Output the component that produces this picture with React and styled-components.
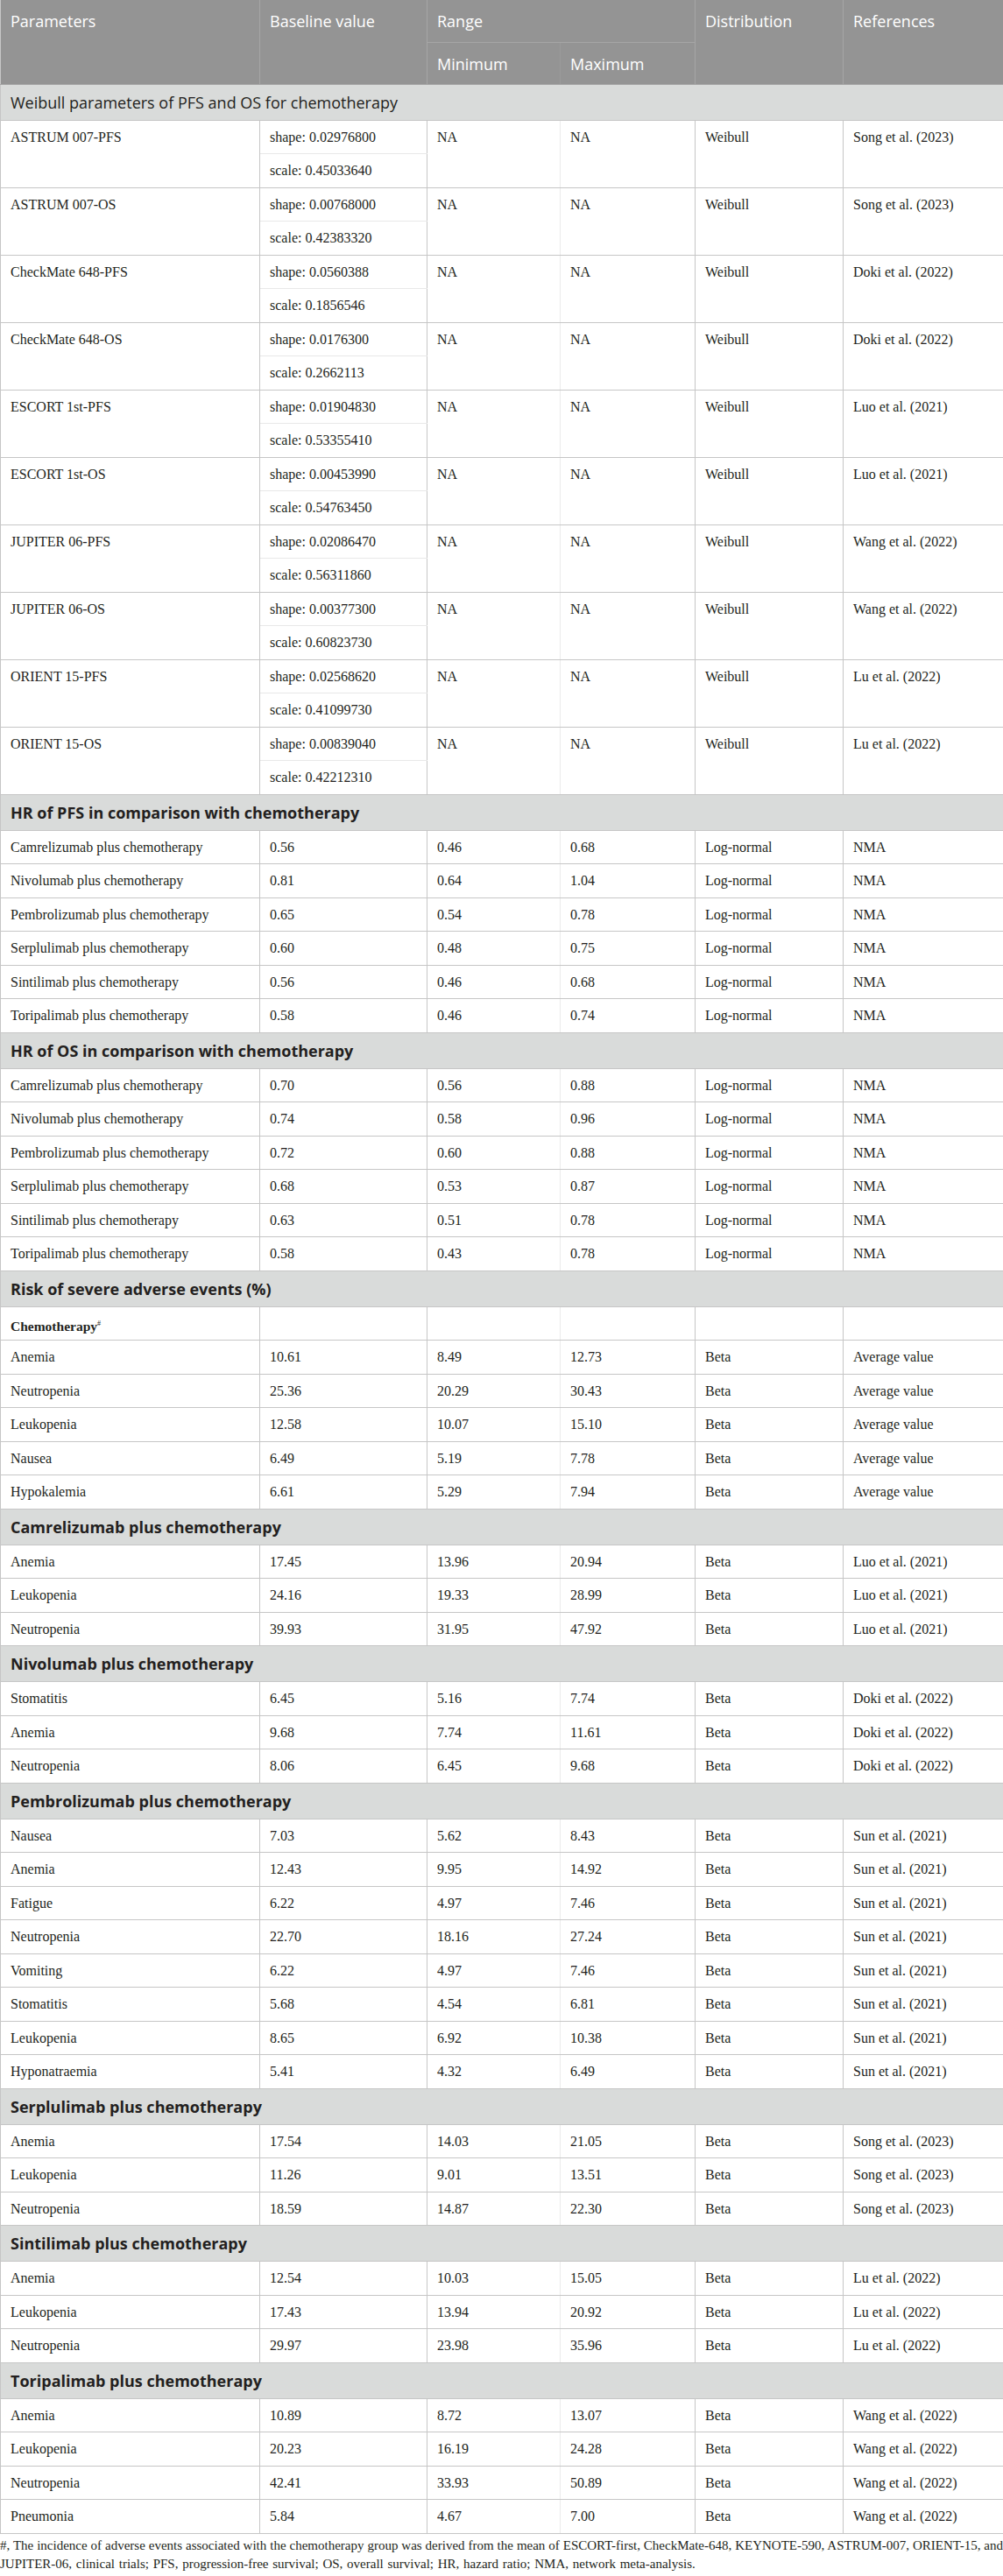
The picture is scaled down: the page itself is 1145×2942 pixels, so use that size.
import React from "react";
import styled, { createGlobalStyle } from "styled-components";

const GlobalStyle = createGlobalStyle`
  body {
    margin: 0;
    background: #ffffff;
  }
`;

const Page = styled.div`
  width: 1145px;
  font-family: "Liberation Serif", "Times New Roman", serif;
  color: #231f20;
`;

const Table = styled.table`
  width: 1145px;
  table-layout: fixed;
  border-collapse: collapse;
  border-left: 1px solid #c6c6c6;
`;

const HeadCell = styled.th`
  box-sizing: border-box;
  height: 48px;
  padding: 12px 11px 0;
  background: #949494;
  color: #ffffff;
  font-family: "Open Sans", "Noto Sans", sans-serif;
  font-size: 18px;
  font-weight: 400;
  line-height: 24px;
  text-align: left;
  vertical-align: top;
  border-right: 1px solid ${props => props.$soft ? "#9a9a9a" : "#a6a6a6"};
  border-bottom: 1px solid #a6a6a6;
`;

const SectionCell = styled.td`
  box-sizing: border-box;
  height: 41px;
  padding: 0 11px;
  background: #d9dbda;
  font-family: "Open Sans", "Noto Sans", sans-serif;
  font-size: 18px;
  font-weight: ${props => props.$bold ? 700 : 400};
  line-height: 24px;
  color: #231f20;
  vertical-align: middle;
  border-right: 1px solid #c6c6c6;
  border-bottom: 1px solid #c6c6c6;
`;

const Cell = styled.td`
  box-sizing: border-box;
  height: 38.5px;
  padding: 9px 11px 0;
  font-size: 16px;
  line-height: 20px;
  vertical-align: top;
  white-space: nowrap;
  border-right: 1px solid ${props => props.$soft ? "#ebebeb" : "#c6c6c6"};
  border-bottom: 1px solid ${props => props.$split ? "#e8e8e8" : "#c6c6c6"};
`;

const GroupLabel = styled.span`
  font-size: 15.5px;
  font-weight: 700;

  sup {
    font-size: 8px;
    font-weight: 400;
    vertical-align: 6px;
  }
`;

const Notes = styled.div`
  padding-top: 3px;
  font-size: 15px;
  line-height: 21px;
`;

const JustifiedLine = styled.div`
  text-align: justify;
  text-align-last: justify;
`;

const PlainLine = styled.div`
  word-spacing: 1px;
`;

const weibull = [
  ["ASTRUM 007-PFS", "0.02976800", "0.45033640", "Song et al. (2023)"],
  ["ASTRUM 007-OS", "0.00768000", "0.42383320", "Song et al. (2023)"],
  ["CheckMate 648-PFS", "0.0560388", "0.1856546", "Doki et al. (2022)"],
  ["CheckMate 648-OS", "0.0176300", "0.2662113", "Doki et al. (2022)"],
  ["ESCORT 1st-PFS", "0.01904830", "0.53355410", "Luo et al. (2021)"],
  ["ESCORT 1st-OS", "0.00453990", "0.54763450", "Luo et al. (2021)"],
  ["JUPITER 06-PFS", "0.02086470", "0.56311860", "Wang et al. (2022)"],
  ["JUPITER 06-OS", "0.00377300", "0.60823730", "Wang et al. (2022)"],
  ["ORIENT 15-PFS", "0.02568620", "0.41099730", "Lu et al. (2022)"],
  ["ORIENT 15-OS", "0.00839040", "0.42212310", "Lu et al. (2022)"],
];

const hrPfs = [
  ["Camrelizumab plus chemotherapy", "0.56", "0.46", "0.68"],
  ["Nivolumab plus chemotherapy", "0.81", "0.64", "1.04"],
  ["Pembrolizumab plus chemotherapy", "0.65", "0.54", "0.78"],
  ["Serplulimab plus chemotherapy", "0.60", "0.48", "0.75"],
  ["Sintilimab plus chemotherapy", "0.56", "0.46", "0.68"],
  ["Toripalimab plus chemotherapy", "0.58", "0.46", "0.74"],
];

const hrOs = [
  ["Camrelizumab plus chemotherapy", "0.70", "0.56", "0.88"],
  ["Nivolumab plus chemotherapy", "0.74", "0.58", "0.96"],
  ["Pembrolizumab plus chemotherapy", "0.72", "0.60", "0.88"],
  ["Serplulimab plus chemotherapy", "0.68", "0.53", "0.87"],
  ["Sintilimab plus chemotherapy", "0.63", "0.51", "0.78"],
  ["Toripalimab plus chemotherapy", "0.58", "0.43", "0.78"],
];

const chemoEvents = [
  ["Anemia", "10.61", "8.49", "12.73"],
  ["Neutropenia", "25.36", "20.29", "30.43"],
  ["Leukopenia", "12.58", "10.07", "15.10"],
  ["Nausea", "6.49", "5.19", "7.78"],
  ["Hypokalemia", "6.61", "5.29", "7.94"],
];

const drugEvents = [
  {
    title: "Camrelizumab plus chemotherapy",
    ref: "Luo et al. (2021)",
    rows: [
      ["Anemia", "17.45", "13.96", "20.94"],
      ["Leukopenia", "24.16", "19.33", "28.99"],
      ["Neutropenia", "39.93", "31.95", "47.92"],
    ],
  },
  {
    title: "Nivolumab plus chemotherapy",
    ref: "Doki et al. (2022)",
    rows: [
      ["Stomatitis", "6.45", "5.16", "7.74"],
      ["Anemia", "9.68", "7.74", "11.61"],
      ["Neutropenia", "8.06", "6.45", "9.68"],
    ],
  },
  {
    title: "Pembrolizumab plus chemotherapy",
    ref: "Sun et al. (2021)",
    rows: [
      ["Nausea", "7.03", "5.62", "8.43"],
      ["Anemia", "12.43", "9.95", "14.92"],
      ["Fatigue", "6.22", "4.97", "7.46"],
      ["Neutropenia", "22.70", "18.16", "27.24"],
      ["Vomiting", "6.22", "4.97", "7.46"],
      ["Stomatitis", "5.68", "4.54", "6.81"],
      ["Leukopenia", "8.65", "6.92", "10.38"],
      ["Hyponatraemia", "5.41", "4.32", "6.49"],
    ],
  },
  {
    title: "Serplulimab plus chemotherapy",
    ref: "Song et al. (2023)",
    rows: [
      ["Anemia", "17.54", "14.03", "21.05"],
      ["Leukopenia", "11.26", "9.01", "13.51"],
      ["Neutropenia", "18.59", "14.87", "22.30"],
    ],
  },
  {
    title: "Sintilimab plus chemotherapy",
    ref: "Lu et al. (2022)",
    rows: [
      ["Anemia", "12.54", "10.03", "15.05"],
      ["Leukopenia", "17.43", "13.94", "20.92"],
      ["Neutropenia", "29.97", "23.98", "35.96"],
    ],
  },
  {
    title: "Toripalimab plus chemotherapy",
    ref: "Wang et al. (2022)",
    rows: [
      ["Anemia", "10.89", "8.72", "13.07"],
      ["Leukopenia", "20.23", "16.19", "24.28"],
      ["Neutropenia", "42.41", "33.93", "50.89"],
      ["Pneumonia", "5.84", "4.67", "7.00"],
    ],
  },
];

const Section = ({title, bold = true}) => (
  <tr>
    <SectionCell colSpan={6} $bold={bold}>{title}</SectionCell>
  </tr>
);

const ValueRow = ({row, dist, source}) => (
  <tr>
    <Cell>{row[0]}</Cell>
    <Cell>{row[1]}</Cell>
    <Cell $soft>{row[2]}</Cell>
    <Cell>{row[3]}</Cell>
    <Cell>{dist}</Cell>
    <Cell>{source}</Cell>
  </tr>
);

const WeibullRows = ({row}) => (
  <>
    <tr>
      <Cell rowSpan={2}>{row[0]}</Cell>
      <Cell $split>shape: {row[1]}</Cell>
      <Cell rowSpan={2} $soft>NA</Cell>
      <Cell rowSpan={2}>NA</Cell>
      <Cell rowSpan={2}>Weibull</Cell>
      <Cell rowSpan={2}>{row[3]}</Cell>
    </tr>
    <tr>
      <Cell>scale: {row[2]}</Cell>
    </tr>
  </>
);

const App = () => {
  return (
    <Page>
      <GlobalStyle />
      <Table>
        <colgroup>
          <col style={{width: 296}} />
          <col style={{width: 191}} />
          <col style={{width: 152}} />
          <col style={{width: 154}} />
          <col style={{width: 169}} />
          <col style={{width: 183}} />
        </colgroup>
        <thead>
          <tr>
            <HeadCell rowSpan={2}>Parameters</HeadCell>
            <HeadCell rowSpan={2}>Baseline value</HeadCell>
            <HeadCell colSpan={2}>Range</HeadCell>
            <HeadCell rowSpan={2}>Distribution</HeadCell>
            <HeadCell rowSpan={2}>References</HeadCell>
          </tr>
          <tr>
            <HeadCell $soft>Minimum</HeadCell>
            <HeadCell>Maximum</HeadCell>
          </tr>
        </thead>
        <tbody>
          <Section title="Weibull parameters of PFS and OS for chemotherapy" bold={false} />
          {weibull.map(row => <WeibullRows key={row[0]} row={row} />)}

          <Section title="HR of PFS in comparison with chemotherapy" />
          {hrPfs.map(row => <ValueRow key={row[0]} row={row} dist="Log-normal" source="NMA" />)}

          <Section title="HR of OS in comparison with chemotherapy" />
          {hrOs.map(row => <ValueRow key={row[0]} row={row} dist="Log-normal" source="NMA" />)}

          <Section title="Risk of severe adverse events (%)" />
          <tr>
            <Cell><GroupLabel>Chemotherapy<sup>#</sup></GroupLabel></Cell>
            <Cell />
            <Cell $soft />
            <Cell />
            <Cell />
            <Cell />
          </tr>
          {chemoEvents.map(row => <ValueRow key={row[0]} row={row} dist="Beta" source="Average value" />)}

          {drugEvents.map(group => (
            <React.Fragment key={group.title}>
              <Section title={group.title} />
              {group.rows.map(row => <ValueRow key={row[0]} row={row} dist="Beta" source={group.ref} />)}
            </React.Fragment>
          ))}
        </tbody>
      </Table>
      <Notes>
        <JustifiedLine>
          #, The incidence of adverse events associated with the chemotherapy group was derived from the mean of ESCORT-first, CheckMate-648, KEYNOTE-590, ASTRUM-007, ORIENT-15, and
        </JustifiedLine>
        <PlainLine>
          JUPITER-06, clinical trials; PFS, progression-free survival; OS, overall survival; HR, hazard ratio; NMA, network meta-analysis.
        </PlainLine>
      </Notes>
    </Page>
  );
}

export default App;
